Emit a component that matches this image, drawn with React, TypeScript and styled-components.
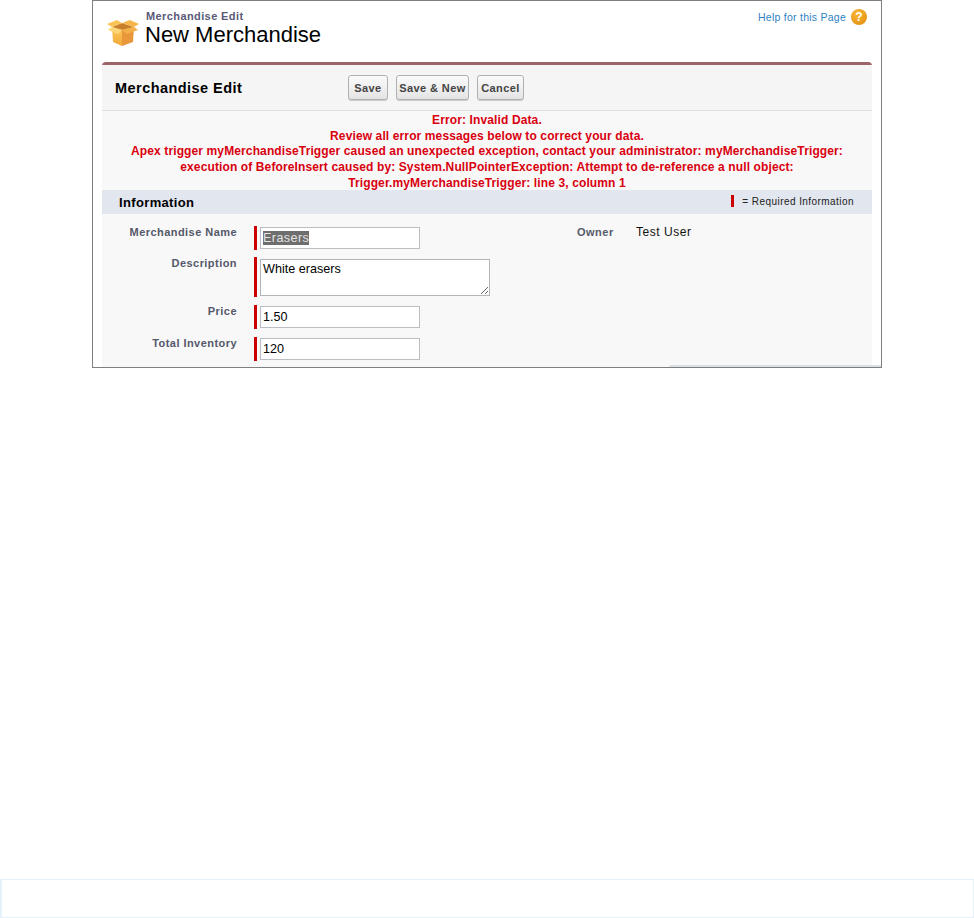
import React from 'react';
import styled, { createGlobalStyle } from 'styled-components';

const GlobalStyle = createGlobalStyle`
html, body {
  margin: 0;
  padding: 0;
  background: #ffffff;
  font-family: "Liberation Sans", Arial, sans-serif;
}
`;

const Page = styled.div`
width: 974px;
height: 918px;
display: flex;
flex-direction: column;
overflow: hidden;
`;

const Frame = styled.div`
position: relative;
box-sizing: border-box;
width: 790px;
height: 368px;
margin-left: 92px;
padding: 0 9px 0 9px;
border: 1px solid #7f7f7f;
overflow: hidden;
background: #ffffff;
`;

const PageHeader = styled.div`
display: flex;
justify-content: space-between;
align-items: flex-start;
height: 61px;
`;

const TitleGroup = styled.div`
display: flex;
align-items: flex-start;
padding: 9px 0 0 5px;
`;

const BoxIcon = styled.svg`
width: 32px;
height: 32px;
margin: 7px 7px 0 0;
`;

const TitleText = styled.div`
display: flex;
flex-direction: column;
`;

const SubTitle = styled.div`
font-size: 11px;
font-weight: bold;
line-height: 12px;
letter-spacing: 0.4px;
color: #5a5a78;
`;

const MainTitle = styled.div`
font-size: 22px;
line-height: 25px;
color: #000000;
margin-left: -1px;
`;

const HelpLink = styled.div`
display: flex;
align-items: center;
gap: 5px;
padding: 8px 5px 0 0;
font-size: 10.5px;
letter-spacing: 0.25px;
color: #2f7fc2;
`;

const HelpIcon = styled.span`
display: flex;
align-items: center;
justify-content: center;
width: 16px;
height: 16px;
border-radius: 50%;
background: radial-gradient(circle at 40% 30%, #f8b733, #e08a0c);
color: #ffffff;
font-size: 12px;
font-weight: bold;
`;

const Panel = styled.div`
width: 770px;
background: #f8f8f8;
border-top: 3px solid #9e6568;
border-radius: 4px 4px 0 0;
`;

const PanelHead = styled.div`
display: flex;
align-items: center;
height: 46px;
box-sizing: border-box;
padding-left: 13px;
background: #f5f5f5;
border-bottom: 1px solid #dfdfdf;
`;

const PanelTitle = styled.div`
width: 233px;
font-size: 14.5px;
font-weight: bold;
letter-spacing: 0.45px;
color: #000000;
`;

const Buttons = styled.div`
display: flex;
gap: 8px;
`;

const Button = styled.button<{ $width: number }>`
width: ${(props) => props.$width}px;
height: 25px;
padding: 0;
font-family: inherit;
font-size: 11px;
font-weight: bold;
letter-spacing: 0.4px;
color: #444444;
background: linear-gradient(#fbfbfb, #e4e4e4);
border: 1px solid #b0b0b0;
border-radius: 3px;
box-shadow: 0 1px 0 #cccccc;
`;

const ErrorBlock = styled.div`
padding: 2px 0 0 0;
height: 79px;
box-sizing: border-box;
text-align: center;
font-size: 12px;
font-weight: bold;
line-height: 15.7px;
letter-spacing: 0.12px;
white-space: nowrap;
color: #d9000f;
`;

const SectionHead = styled.div`
display: flex;
align-items: center;
justify-content: space-between;
height: 24px;
padding: 0 18px 0 17px;
background: #e1e6ef;
`;

const SectionTitle = styled.div`
font-size: 13px;
font-weight: bold;
letter-spacing: 0.35px;
color: #000000;
`;

const Legend = styled.div`
display: flex;
align-items: center;
gap: 8px;
padding-bottom: 2px;
font-size: 10px;
letter-spacing: 0.44px;
color: #222222;
`;

const LegendBar = styled.span`
display: block;
width: 3px;
height: 12px;
background: #cc0000;
`;

const FormGrid = styled.div`
display: grid;
grid-template-columns: 388px 1fr;
align-items: start;
padding-top: 12px;
`;

const FieldColumn = styled.div`
display: flex;
flex-direction: column;
`;

const FieldRow = styled.div<{ $gap: number }>`
display: flex;
align-items: flex-start;
margin-bottom: ${(props) => props.$gap}px;
`;

const Label = styled.div`
flex: none;
width: 135px;
text-align: right;
font-size: 11px;
font-weight: bold;
line-height: 13px;
letter-spacing: 0.45px;
white-space: nowrap;
color: #55586a;
`;

const Required = styled.div`
display: flex;
gap: 3px;
margin-left: 17px;
`;

const RequiredBar = styled.span`
display: block;
width: 3px;
background: #cc0000;
`;

const Input = styled.div`
box-sizing: border-box;
width: 160px;
height: 22px;
margin: 1px 0;
padding: 0 2px;
display: flex;
align-items: center;
font-size: 12.6px;
color: #000000;
background: #ffffff;
border: 1px solid #bdbdc4;
`;

const Selected = styled.span`
background: #6e6e6e;
color: #e4e4e4;
letter-spacing: 0.4px;
`;

const TextArea = styled.textarea`
display: block;
box-sizing: border-box;
width: 230px;
height: 37px;
margin: 2px 0 1px;
padding: 2px;
font-family: inherit;
font-size: 12.6px;
color: #000000;
background: #ffffff;
border: 1px solid #b4b4ba;
border-radius: 0;
outline: none;
resize: both;
`;

const OwnerColumn = styled.div`
display: flex;
align-items: flex-start;
margin-left: 87px;
`;

const OwnerLabel = styled.div`
width: 59px;
font-size: 11px;
font-weight: bold;
line-height: 13px;
letter-spacing: 0.5px;
color: #55586a;
`;

const OwnerValue = styled.div`
font-size: 12px;
line-height: 13px;
letter-spacing: 0.55px;
color: #111111;
`;

const CornerSliver = styled.div`
position: absolute;
right: 0;
bottom: 0;
width: 212px;
height: 2px;
background: #d9dfe4;
border-top-left-radius: 2px;
`;

const BottomBar = styled.div`
box-sizing: border-box;
width: 974px;
height: 39px;
margin-top: 511px;
background: #ffffff;
border: 1px solid #e4f3fa;
border-left-width: 2px;
`;

const App = () => {
  return (
    <Page>
      <GlobalStyle />
      <Frame>
        <PageHeader>
          <TitleGroup>
            <BoxIcon viewBox="0 0 32 32">
              <defs>
                <linearGradient id="front" x1="0" y1="0" x2="0" y2="1">
                  <stop offset="0" stopColor="#fbc95a" />
                  <stop offset="1" stopColor="#f3a93a" />
                </linearGradient>
              </defs>
              <path d="M5 10 L15 13 L15 29 L6 25 Z" fill="url(#front)" />
              <path d="M15 13 L27 10 L26 25 L15 29 Z" fill="#e8973a" />
              <path d="M5 10 L15 6 L27 10 L15 13 Z" fill="#c9802a" />
              <path d="M5 10 L0 7 L10 3 L15 6 Z" fill="#fbc356" />
              <path d="M27 10 L32 7 L23 3 L15 6 Z" fill="#f7b64a" />
              <path d="M5 10 L15 13 L11 17 L1 13 Z" fill="#fdd678" />
              <path d="M27 10 L15 13 L20 17 L31 13 Z" fill="#f4b048" />
            </BoxIcon>
            <TitleText>
              <SubTitle>Merchandise Edit</SubTitle>
              <MainTitle>New Merchandise</MainTitle>
            </TitleText>
          </TitleGroup>
          <HelpLink>
            Help for this Page
            <HelpIcon>?</HelpIcon>
          </HelpLink>
        </PageHeader>
        <Panel>
          <PanelHead>
            <PanelTitle>Merchandise Edit</PanelTitle>
            <Buttons>
              <Button $width={40}>Save</Button>
              <Button $width={73}>Save &amp; New</Button>
              <Button $width={47}>Cancel</Button>
            </Buttons>
          </PanelHead>
          <ErrorBlock>
            Error: Invalid Data.
            <br />
            Review all error messages below to correct your data.
            <br />
            Apex trigger myMerchandiseTrigger caused an unexpected exception, contact your administrator: myMerchandiseTrigger:
            <br />
            execution of BeforeInsert caused by: System.NullPointerException: Attempt to de-reference a null object:
            <br />
            Trigger.myMerchandiseTrigger: line 3, column 1
          </ErrorBlock>
          <SectionHead>
            <SectionTitle>Information</SectionTitle>
            <Legend>
              <LegendBar />= Required Information
            </Legend>
          </SectionHead>
          <FormGrid>
            <FieldColumn>
              <FieldRow $gap={7}>
                <Label>Merchandise Name</Label>
                <Required>
                  <RequiredBar />
                  <Input>
                    <Selected>Erasers</Selected>
                  </Input>
                </Required>
              </FieldRow>
              <FieldRow $gap={8}>
                <Label>Description</Label>
                <Required>
                  <RequiredBar />
                  <TextArea defaultValue="White erasers" readOnly />
                </Required>
              </FieldRow>
              <FieldRow $gap={8}>
                <Label>Price</Label>
                <Required>
                  <RequiredBar />
                  <Input>1.50</Input>
                </Required>
              </FieldRow>
              <FieldRow $gap={8}>
                <Label>Total Inventory</Label>
                <Required>
                  <RequiredBar />
                  <Input>120</Input>
                </Required>
              </FieldRow>
            </FieldColumn>
            <OwnerColumn>
              <OwnerLabel>Owner</OwnerLabel>
              <OwnerValue>Test User</OwnerValue>
            </OwnerColumn>
          </FormGrid>
        </Panel>
        <CornerSliver />
      </Frame>
      <BottomBar />
    </Page>
  );
};

export default App;
